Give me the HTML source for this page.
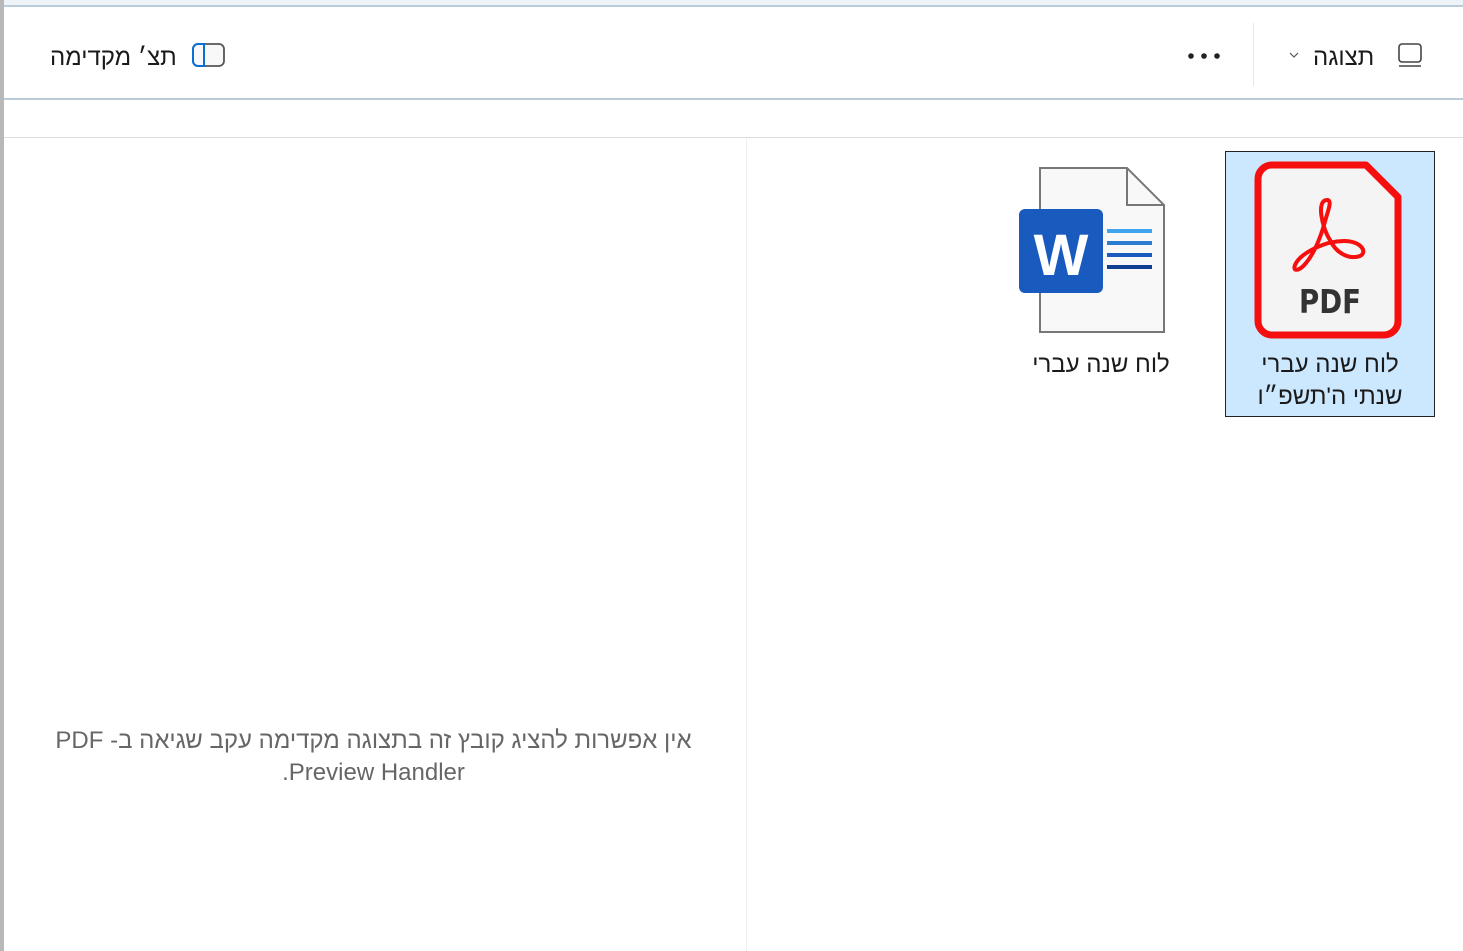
<!DOCTYPE html>
<html><head><meta charset="utf-8"><style>
body{margin:0;width:1463px;height:951px;position:relative;background:#fff;overflow:hidden;font-family:"Liberation Sans","Noto Sans CJK SC",sans-serif;}
.a{position:absolute;}
.t{position:absolute;white-space:nowrap;font-size:23px;color:#1a1a1a;direction:rtl;}
.c{text-align:center;}
</style></head><body>
<div class="a" style="left:0;top:0;width:1463px;height:6px;background:#eef3f8"></div>
<div class="a" style="left:0;top:5px;width:1463px;height:2px;background:#bccbd8"></div>
<div class="a" style="left:0;top:98px;width:1463px;height:2px;background:#bccbd8"></div>
<div class="a" style="left:0;top:137px;width:1463px;height:1px;background:#dedede"></div>
<div class="a" style="left:0;top:0;width:4px;height:951px;background:#b8b8b8"></div>
<div class="a" style="left:1253px;top:23px;width:1px;height:63px;background:#e6e6e6"></div>
<div class="a" style="left:746px;top:138px;width:1px;height:813px;background:#f0f0f0"></div>

<svg class="a" style="left:1396px;top:42px" width="28" height="28" viewBox="0 0 28 28"><rect x="3" y="2" width="22" height="18" rx="3" fill="none" stroke="#444" stroke-width="1.6"/><line x1="3" y1="24" x2="25" y2="24" stroke="#444" stroke-width="1.6"/></svg>
<div class="t" style="left:1313px;top:44px;font-size:24px">תצוגה</div>
<svg class="a" style="left:1288px;top:50px" width="12" height="10"><path d="M2 3 L6 7 L10 3" fill="none" stroke="#555" stroke-width="1.2"/></svg>
<svg class="a" style="left:1186px;top:49px" width="38" height="14"><circle cx="5" cy="7" r="2.8" fill="#222"/><circle cx="18" cy="7" r="2.8" fill="#222"/><circle cx="31" cy="7" r="2.8" fill="#222"/></svg>

<svg class="a" style="left:190px;top:42px" width="36" height="28"><rect x="3" y="2" width="31" height="22" rx="5" fill="#f8f8f8" stroke="#555" stroke-width="1.8"/><path d="M8 2 H14 V24 H8 A5 5 0 0 1 3 19 V7 A5 5 0 0 1 8 2Z" fill="none" stroke="#0a6fd4" stroke-width="2"/></svg>
<div class="t" style="left:50px;top:44px;font-size:24px">תצ׳ מקדימה</div>

<div class="a" style="left:1225px;top:151px;width:208px;height:264px;background:#cce8ff;border:1px solid #222"></div>
<svg class="a" style="left:1254px;top:158px" width="152" height="184"><path d="M18 7 H112 L144 39 V163 A14 14 0 0 1 130 177 H18 A14 14 0 0 1 4 163 V21 A14 14 0 0 1 18 7Z" fill="#f4f4f4" stroke="#f60f0f" stroke-width="7" stroke-linejoin="round"/>
<path d="M73 42 C62 42 68 70 76 82 C82 95 95 102 106 98 C114 94 107 83 90 83 C70 83 48 95 42 105 C37 114 45 114 52 105 C62 93 68 75 72 60 C75 50 78 42 73 42Z" fill="none" stroke="#f60f0f" stroke-width="4"/>
<text x="76" y="155" text-anchor="middle" font-family="DejaVu Sans,sans-serif" font-size="33" font-weight="bold" fill="#333" textLength="62" lengthAdjust="spacingAndGlyphs">PDF</text></svg>
<div class="t c" style="left:1226px;top:351px;width:208px;font-size:24px">לוח שנה עברי</div>
<div class="t c" style="left:1226px;top:383px;width:208px;font-size:24px">שנתי ה'תשפ״ו</div>

<svg class="a" style="left:1015px;top:165px" width="155" height="172"><path d="M25 3 H112 L149 40 V167 H25Z" fill="#f8f8f8" stroke="#777" stroke-width="2"/><path d="M112 3 V40 H149" fill="none" stroke="#777" stroke-width="2"/>
<rect x="92" y="64" width="45" height="4" fill="#41a5ee"/><rect x="92" y="76" width="45" height="4" fill="#2b7cd3"/><rect x="92" y="88" width="45" height="4" fill="#185abd"/><rect x="92" y="100" width="45" height="4" fill="#103f91"/>
<rect x="4" y="44" width="84" height="84" rx="6" fill="#185abd"/>
<text x="46" y="110" text-anchor="middle" font-family="Liberation Sans,sans-serif" font-size="58" font-weight="bold" fill="#fff">W</text></svg>
<div class="t c" style="left:1001px;top:351px;width:200px;font-size:24px">לוח שנה עברי</div>

<div class="t c" style="left:37px;top:727px;width:673px;color:#666;font-size:24px">אין אפשרות להציג קובץ זה בתצוגה מקדימה עקב שגיאה ב- PDF</div>
<div class="t c" style="left:37px;top:759px;width:673px;color:#666;font-size:24px;direction:ltr">.Preview Handler</div>
</body></html>
